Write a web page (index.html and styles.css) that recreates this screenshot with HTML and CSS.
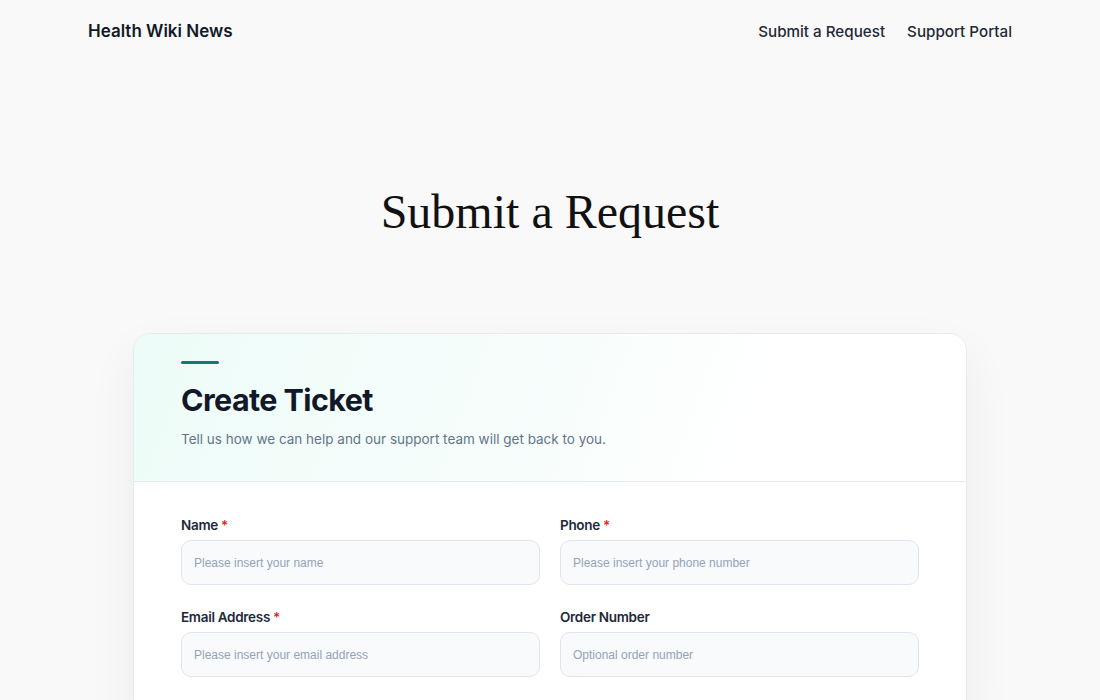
FILE: index.html
```html
<!DOCTYPE html>
<html lang="en">
<head>
<meta charset="utf-8">
<title>Submit a Request - Health Wiki News</title>
<link rel="stylesheet" href="styles.css">
</head>
<body>
<header class="site-header">
  <a class="brand" href="#">Health Wiki News</a>
  <nav class="nav">
    <a href="#">Submit a Request</a>
    <a href="#">Support Portal</a>
  </nav>
</header>
<main class="main">
  <h1 class="page-title">Submit a Request</h1>
  <section class="card">
    <div class="card-head">
      <span class="accent"></span>
      <h2 class="card-title">Create Ticket</h2>
      <p class="card-sub">Tell us how we can help and our support team will get back to you.</p>
    </div>
    <form class="card-body">
      <div class="field">
        <label class="label">Name <span class="req">*</span></label>
        <input class="input" type="text" placeholder="Please insert your name">
      </div>
      <div class="field">
        <label class="label">Phone <span class="req">*</span></label>
        <input class="input" type="text" placeholder="Please insert your phone number">
      </div>
      <div class="field">
        <label class="label">Email Address <span class="req">*</span></label>
        <input class="input" type="text" placeholder="Please insert your email address">
      </div>
      <div class="field">
        <label class="label">Order Number</label>
        <input class="input" type="text" placeholder="Optional order number">
      </div>
    </form>
  </section>
</main>
</body>
</html>
```
FILE: styles.css
```css
* { box-sizing: border-box; }
html, body { margin: 0; padding: 0; }
body {
  background: #f9f9f9;
  font-family: Inter, "Noto Sans", sans-serif;
  color: #1f2937;
}
.site-header {
  max-width: 924px;
  margin: 0 auto;
  height: 62px;
  display: flex;
  align-items: center;
  justify-content: space-between;
}
.brand {
  font-size: 17px;
  font-weight: 600;
  color: #111827;
  text-decoration: none;
}
.nav { display: flex; gap: 22px; }
.nav a {
  font-size: 15.2px;
  font-weight: 500;
  color: #1f2937;
  text-decoration: none;
}
.main {
  padding-top: 115px;
}
.page-title {
  margin: 0;
  text-align: center;
  font-family: "Liberation Serif", "DejaVu Serif", serif;
  font-weight: 400;
  font-size: 48px;
  line-height: 70px;
  color: #111;
}
.card {
  width: 834px;
  margin: 86px auto 0;
  background: #fff;
  border: 1px solid #e8eaee;
  border-radius: 18px;
  box-shadow: 0 20px 50px rgba(15, 23, 42, 0.06);
  overflow: hidden;
}
.card-head {
  padding: 27px 47px 32px;
  background: linear-gradient(110deg, #edfcf8 0%, #f5fdfb 40%, #ffffff 75%);
  border-bottom: 1px solid #e6e9ee;
}
.accent {
  display: block;
  width: 38px;
  height: 3px;
  border-radius: 2px;
  background: #137a6c;
}
.card-title {
  margin: 17px 0 0;
  font-size: 30.5px;
  line-height: 38px;
  font-weight: 700;
  letter-spacing: -0.6px;
  color: #111827;
}
.card-sub {
  margin: 10px 0 0;
  font-size: 13.5px;
  line-height: 20px;
  color: #64748b;
}
.card-body {
  padding: 34px 47px 40px;
  display: grid;
  grid-template-columns: 1fr 1fr;
  column-gap: 20px;
  row-gap: 23px;
}
.field { display: flex; flex-direction: column; }
.label {
  font-size: 13.5px;
  line-height: 18px;
  font-weight: 600;
  color: #1e293b;
  letter-spacing: -0.3px;
  margin-bottom: 6px;
}
.req { color: #dc2626; }
.input {
  height: 45px;
  border: 1px solid #dfe5ee;
  border-radius: 10px;
  background: #f8fafc;
  padding: 0 12px;
  font-family: "Liberation Sans", Arial, sans-serif;
  font-size: 12px;
  color: #1f2937;
  outline: none;
}
.input::placeholder { color: #94a3b8; }
```
